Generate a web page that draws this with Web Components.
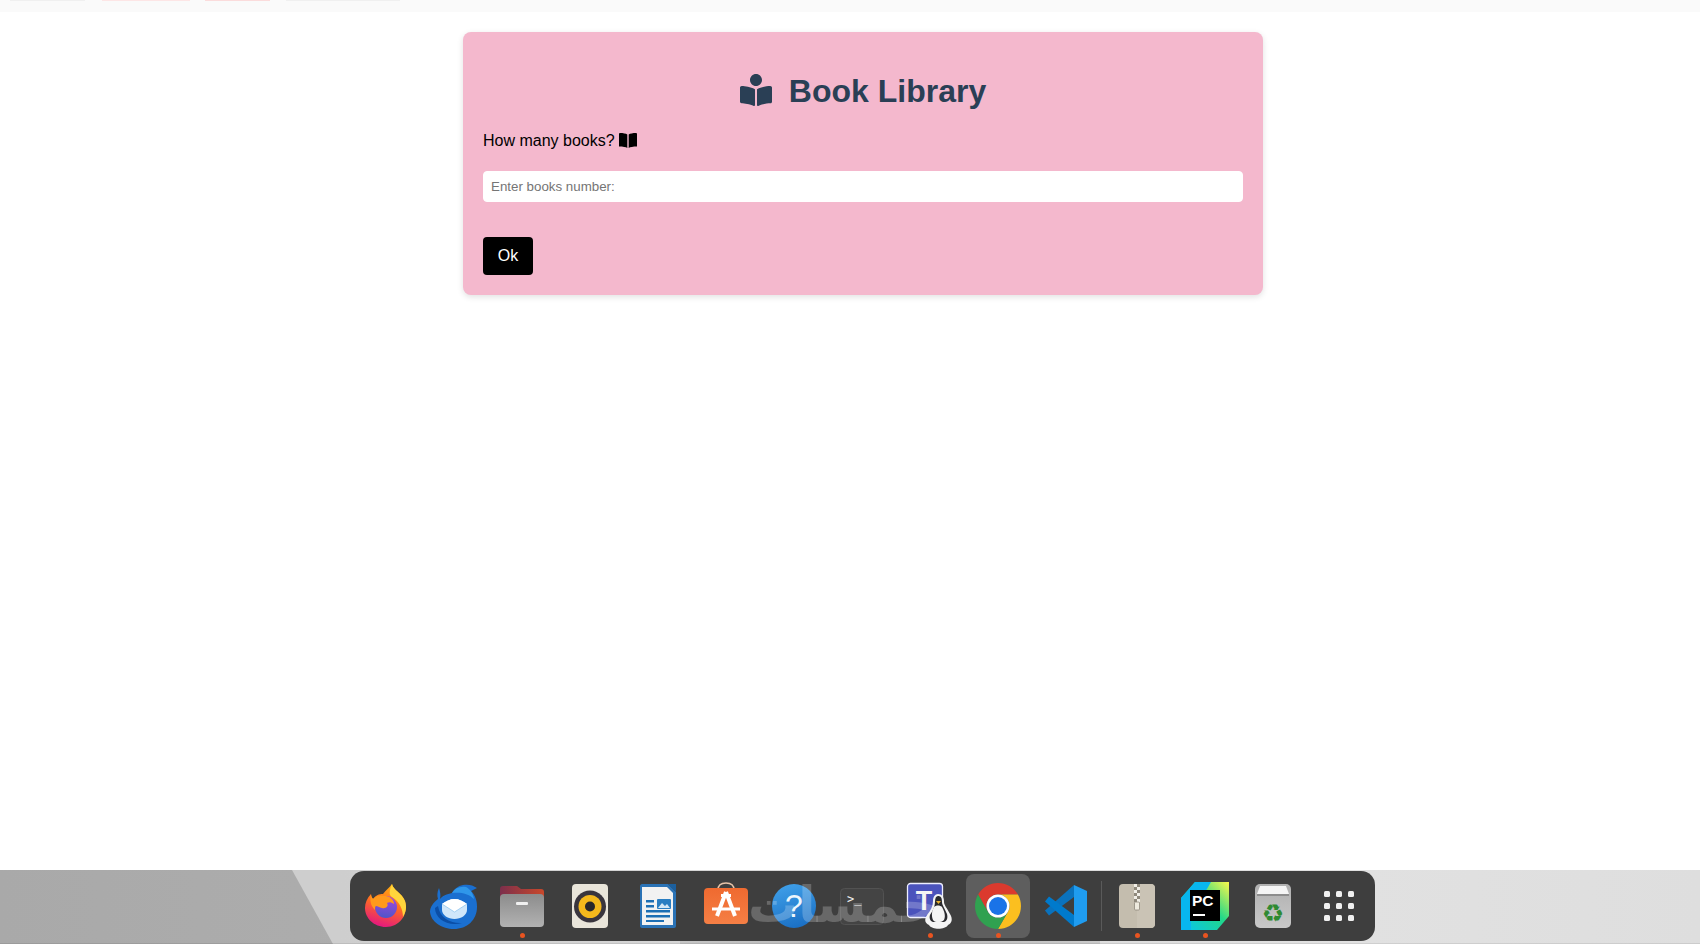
<!DOCTYPE html>
<html>
<head>
<meta charset="utf-8">
<title>Book Library</title>
<style>
  html, body { margin: 0; height: 100%; background: #fff; font-family: "Liberation Sans", Arial, sans-serif; overflow: hidden; }
  body { display: flex; flex-direction: column; }
</style>
</head>
<body>
<top-strip></top-strip>
<library-page>
  <library-card>
    <span slot="title">Book Library</span>
    <span slot="label">How many books?</span>
  </library-card>
</library-page>
<desk-strip>
  <dock-bar>
    <dock-item>
      <svg viewBox="0 0 48 48" width="48" height="48">
        <defs>
          <linearGradient id="ffBody" x1="0.7" y1="0" x2="0.4" y2="1"><stop offset="0" stop-color="#ffb20e"/><stop offset=".5" stop-color="#ff6a24"/><stop offset="1" stop-color="#e3177f"/></linearGradient>
          <linearGradient id="ffGlobe" x1="0.5" y1="0" x2="0.4" y2="1"><stop offset="0" stop-color="#a447e0"/><stop offset="1" stop-color="#4f55c8"/></linearGradient>
        </defs>
        <path d="M30 2C31 8 40 11 43 19C47 33 37 45 24 45C12 45 3 36 3 26C3 21 5 16 9 12C9 14 10 16 11 17C14 13 17 12 21 12C24 8 27 6 30 2Z" fill="url(#ffBody)"/>
        <path d="M30 2C31 8 40 11 43 19C45 25 44 30 41 35C41 27 37 19 30 15C26 13 28 7 30 2Z" fill="#ffd53c"/>
        <circle cx="24" cy="25" r="11" fill="url(#ffGlobe)"/>
        <path d="M9 12C9 14 10 16 11 17C14 13 19 13 24 14C29 15 32 18 32 22C29 20 27 20 25 21C27 24 24 27 20 26C15 25 13 21 13 28C10 25 7 20 9 12Z" fill="#ff9a1c"/>
      </svg>
    </dock-item>
    <dock-item>
      <svg viewBox="0 0 48 48" width="48" height="48">
        <path d="M9 6C7 10 7 14 8 17C3 21 0 25 0 30C1 40 12 47 24 47C37 47 47 38 47 25C47 18 45 13 41 9L47 6C43 3 38 2 33 3C28 4 24 7 22 11C17 12 12 14 10 17C11 13 10 9 9 6Z" fill="#1a6fd0"/>
        <path d="M22 11C25 6 30 4 36 5C40 7 43 11 44 17C38 11 30 10 22 11Z" fill="#2f97ea"/>
        <path d="M5 26C5 37 18 45 32 41C22 42 10 37 8 24Z" fill="#0b4ea6"/>
        <path d="M12 22C16 19 20 17 24.500 17C29 17 33 19 37 22V28C37 33 31 37 24.500 37C18 37 12 33 12 28Z" fill="#cfe6fa"/>
        <path d="M12 22C16 19 20 17 24.500 17C29 17 33 19 37 22L24.500 30Z" fill="#fff"/>
        <path d="M12 22L24.500 30L37 22" fill="none" stroke="#93c6ef" stroke-width=".8"/>
      </svg>
    </dock-item>
    <dock-item running>
      <svg viewBox="0 0 48 48" width="48" height="48">
        <defs>
          <linearGradient id="fdBack" x1="0" y1="0" x2="1" y2="0"><stop offset="0" stop-color="#7c2f4c"/><stop offset="1" stop-color="#c9482b"/></linearGradient>
          <linearGradient id="fdFront" x1="0" y1="0" x2="0" y2="1"><stop offset="0" stop-color="#8c8c8c"/><stop offset="1" stop-color="#b2b2b2"/></linearGradient>
        </defs>
        <path d="M2 7C2 5 3 4 5 4H19L23 7H43C45 7 46 8 46 10V20H2Z" fill="url(#fdBack)"/>
        <rect x="2" y="12" width="44" height="33" rx="4" fill="url(#fdFront)"/>
        <rect x="18" y="20" width="12" height="3" rx="1" fill="#f0f0f0"/>
      </svg>
    </dock-item>
    <dock-item>
      <svg viewBox="0 0 48 48" width="48" height="48">
        <rect x="6" y="2" width="36" height="44" rx="4" fill="#e9e5da"/>
        <circle cx="24" cy="24.500" r="16" fill="#39353d"/>
        <circle cx="24" cy="24.500" r="11.500" fill="#f4b81c"/>
        <circle cx="24" cy="24.500" r="5" fill="#29272b"/>
      </svg>
    </dock-item>
    <dock-item>
      <svg viewBox="0 0 48 48" width="48" height="48">
        <path d="M6 4C6 3 7 2 8 2H34L42 10V44C42 45 41 46 40 46H8C7 46 6 45 6 44Z" fill="#2a72b5"/>
        <path d="M8 5H33L39 11V43H8Z" fill="#f2f2f2"/>
        <path d="M34 2H42V10Z" fill="#1b5f9e"/>
        <path d="M12 18H20V20.500H12ZM12 23H20V25.500H12ZM12 28H36V30.500H12ZM12 33H36V35.500H12ZM12 38H30V40H12Z" fill="#1d6fb4"/>
        <rect x="23" y="17" width="14" height="10" rx="1" fill="#2a7ec2"/>
        <path d="M24 26L28 21L31 24L33 22L36 26Z" fill="#d5e8f6"/>
      </svg>
    </dock-item>
    <dock-item>
      <svg viewBox="0 0 48 48" width="48" height="48">
        <defs><linearGradient id="acBag" x1="0" y1="0" x2="0" y2="1"><stop offset="0" stop-color="#ef6a30"/><stop offset="1" stop-color="#f57f45"/></linearGradient></defs>
        <path d="M16 8C16 3 19 1 24 1C29 1 32 3 32 8" fill="none" stroke="#e7c3a8" stroke-width="1.500"/>
        <rect x="2" y="6" width="44" height="36" rx="4" fill="url(#acBag)"/>
        <path d="M24 10L15 34M24 10L33 34" stroke="#fff" stroke-width="4" fill="none"/>
        <path d="M10 27H38" stroke="#fff" stroke-width="3"/>
        <path d="M19 12H29V15H19Z" fill="#fff"/>
      </svg>
    </dock-item>
    <dock-item>
      <svg viewBox="0 0 48 48" width="48" height="48">
        <defs><linearGradient id="hpBall" x1="0.3" y1="0" x2="0.6" y2="1"><stop offset="0" stop-color="#3f9fe8"/><stop offset="1" stop-color="#1a6fc4"/></linearGradient></defs>
        <circle cx="24" cy="24" r="22" fill="url(#hpBall)"/>
        <text x="24" y="35" text-anchor="middle" font-family="Liberation Sans, sans-serif" font-size="32" fill="#eef6fc">?</text>
      </svg>
    </dock-item>
    <dock-item>
      <svg viewBox="0 0 48 48" width="48" height="48">
        <rect x="2.500" y="6.500" width="43" height="36" rx="4" fill="#444" stroke="#525252"/>
        <text x="9" y="21" font-family="DejaVu Sans Mono, monospace" font-size="12" fill="#f2f2f2">&gt;_</text>
      </svg>
    </dock-item>
    <dock-item running>
      <svg viewBox="0 0 48 48" width="48" height="48">
        <rect x="1.500" y="1.500" width="35" height="34" rx="3" fill="#4b53bc" stroke="#eef" stroke-width="1.300"/>
        <text x="18" y="28" text-anchor="middle" font-family="Liberation Sans, sans-serif" font-weight="700" font-size="27" fill="#f4f4f4">T</text>
        <path d="M32 12C36 12 38 15 38 20C38 23 41 26 44 32C47 37 46 41 42 43C39 48 26 48 23 43C19 41 18 38 21 33C25 28 27 24 27 19C27 15 29 12 32 12Z" fill="#f4f4f4"/>
        <path d="M32 14C35 14 36 16 36 20C36 23 39 27 41 32C42 36 41 39 38 40L27 40C24 39 23 36 24 33C27 28 29 24 29 20C29 16 30 14 32 14Z" fill="#2a2a2e"/>
        <path d="M28 25C30 23 34 23 36 25C38 29 40 33 38 38C35 41 29 41 27 38C25 33 26 29 28 25Z" fill="#f4f4f4"/>
        <path d="M30 19L35 19L32.500 22Z" fill="#e8b030"/>
      </svg>
    </dock-item>
    <dock-item running active>
      <svg viewBox="0 0 48 48" width="48" height="48">
        <path d="M4.100 12.500A23 23 0 0 1 43.900 12.500L24 12.500A11.500 11.500 0 0 0 14 30Z" fill="#db3a2e"/>
        <path d="M43.900 12.500A23 23 0 0 1 24 47L34 29.800A11.500 11.500 0 0 0 24 12.500Z" fill="#fbbf1f"/>
        <path d="M24 47A23 23 0 0 1 4.100 12.500L14 30A11.500 11.500 0 0 0 34 29.800Z" fill="#30a150"/>
        <circle cx="24" cy="24" r="11.500" fill="#fff"/>
        <circle cx="24" cy="24" r="9" fill="#1a73e8"/>
      </svg>
    </dock-item>
    <dock-item>
      <svg viewBox="0 0 48 48" width="48" height="48">
        <polygon points="3,28.500 32,3 32,15 7,33.500" fill="#0a72bd"/>
        <polygon points="3,19.500 7,14.500 32,33 32,45" fill="#007acc"/>
        <polygon points="32,3 45,9 45,39 32,45" fill="#1f9cf0"/>
      </svg>
    </dock-item>
    <dock-sep></dock-sep>
    <dock-item running>
      <svg viewBox="0 0 48 48" width="48" height="48">
        <rect x="6" y="2" width="36" height="44" rx="4" fill="#c4bdae"/>
        <path d="M24 2H38C40 2 42 4 42 6V42C42 44 40 46 38 46H24Z" fill="#cac3b5"/>
        <path d="M21 2H24V5H21ZM24 5H27V8H24ZM21 8H24V11H21ZM24 11H27V14H24ZM21 14H24V17H21ZM24 17H27V20H24Z" fill="#f1eee6"/>
        <path d="M24 2H27V5H24ZM21 5H24V8H21ZM24 8H27V11H24ZM21 11H24V14H21ZM24 14H27V17H24ZM21 17H24V20H21Z" fill="#8f897c"/>
        <rect x="21.500" y="20" width="5" height="8" rx="1" fill="#eeeade" stroke="#8f897c" stroke-width=".8"/>
      </svg>
    </dock-item>
    <dock-item running>
      <svg viewBox="0 0 48 48" width="48" height="48">
        <defs><linearGradient id="pcBg" x1="0" y1="1" x2="1" y2="0"><stop offset="0" stop-color="#07c3f2"/><stop offset=".55" stop-color="#21d789"/><stop offset="1" stop-color="#fcf84a"/></linearGradient></defs>
        <path d="M14 0H48V34L36 48H0V16Z" fill="url(#pcBg)"/>
        <path d="M0 16L14 0H30L10 34V48H0Z" fill="#08b6ee"/>
        <rect x="9" y="8" width="30" height="31" fill="#000"/>
        <text x="11" y="24" font-family="Liberation Sans, sans-serif" font-weight="700" font-size="15.500" fill="#fff">PC</text>
        <rect x="12" y="32" width="12" height="2" fill="#fff"/>
      </svg>
    </dock-item>
    <dock-item>
      <svg viewBox="0 0 48 48" width="48" height="48">
        <defs><linearGradient id="trBody" x1="0" y1="0" x2="0" y2="1"><stop offset="0" stop-color="#b0b0b0"/><stop offset="1" stop-color="#c8c8c8"/></linearGradient></defs>
        <rect x="6" y="2" width="36" height="44" rx="5" fill="url(#trBody)"/>
        <path d="M11 4H37L40 12H8Z" fill="#f5f5f5"/>
        <path d="M8 12H40V14H8Z" fill="#8d8d8d"/>
        <text x="24" y="40" text-anchor="middle" font-family="DejaVu Sans, sans-serif" font-size="25" fill="#2f8a32">&#9851;</text>
      </svg>
    </dock-item>
    <dock-item>
      <svg viewBox="0 0 48 48" width="48" height="48" fill="#f0f0f0">
        <rect x="7" y="9" width="6" height="6" rx="1.500"/><rect x="19" y="9" width="6" height="6" rx="1.500"/><rect x="31" y="9" width="6" height="6" rx="1.500"/>
        <rect x="7" y="21" width="6" height="6" rx="1.500"/><rect x="19" y="21" width="6" height="6" rx="1.500"/><rect x="31" y="21" width="6" height="6" rx="1.500"/>
        <rect x="7" y="33" width="6" height="6" rx="1.500"/><rect x="19" y="33" width="6" height="6" rx="1.500"/><rect x="31" y="33" width="6" height="6" rx="1.500"/>
      </svg>
    </dock-item>
  </dock-bar>
</desk-strip>

<script>
// tiny helper, every element below clones its own template
function makeTemplate(html) {
  const template = document.createElement('template')
  template.innerHTML = html
  return template
}

class BaseEl extends HTMLElement {
  constructor() {
    super()
    this._shadowRoot = this.attachShadow({ mode: 'open' })
    this._shadowRoot.appendChild(this.constructor.template.content.cloneNode(true))
  }
}

class TopStrip extends BaseEl {}
TopStrip.template = makeTemplate(`
  <style>
    :host { display: flex; height: 12px; background: #fafafa; flex: none; align-items: flex-start; }
    i { display: block; height: 1px; }
    .a { width: 75px; margin-left: 10px; background: #f0f0f0; }
    .b { width: 88px; margin-left: 17px; background: #fde6e6; }
    .c { width: 65px; margin-left: 15px; background: #fbdcdc; }
    .d { width: 114px; margin-left: 16px; background: #f0f0f0; }
  </style>
  <i class="a"></i><i class="b"></i><i class="c"></i><i class="d"></i>
`)
customElements.define('top-strip', TopStrip)

class LibraryPage extends BaseEl {}
LibraryPage.template = makeTemplate(`
  <style>
    :host { display: flex; flex: 1; justify-content: center; align-items: flex-start; padding: 20px 0 0 26px; }
  </style>
  <slot></slot>
`)
customElements.define('library-page', LibraryPage)

class LibraryCard extends BaseEl {}
LibraryCard.template = makeTemplate(`
  <style>
    :host {
      display: block; box-sizing: border-box; width: 800px; padding: 20px;
      background: #f4b8cd; border-radius: 8px; box-shadow: 0 2px 6px rgba(0,0,0,.12);
      font: 16px "Liberation Sans", Arial, sans-serif; color: #000;
    }
    h1 { display: flex; justify-content: center; align-items: center; gap: 17px; margin: 21px 0 22px; font-size: 32px; line-height: 37px; color: #2a3f55; }
    h1 svg { width: 32px; height: 32px; fill: currentColor; margin-bottom: 3px; }
    .label { display: flex; align-items: center; gap: 4px; height: 18px; margin-bottom: 21px; }
    .label svg { width: 18px; height: 15px; margin-bottom: 1px; }
    input {
      display: block; box-sizing: border-box; width: 100%; height: 31px; padding: 0 7px; margin-bottom: 35px;
      border: 1px solid #fff; border-radius: 4px; background: #fff; font: 13.333px "Liberation Sans", Arial, sans-serif;
    }
    button {
      display: block; width: 50px; height: 38px; padding: 0; border: 0; border-radius: 4px;
      background: #000; color: #fff; font: 16px "Liberation Sans", Arial, sans-serif;
    }
  </style>
  <h1>
    <svg viewBox="0 0 512 512"><path d="M352 96c0-53.020-42.980-96-96-96s-96 42.980-96 96 42.980 96 96 96 96-42.980 96-96zM233.590 241.100c-59.330-36.320-155.430-46.300-203.790-49.050C13.550 191.130 0 203.510 0 219.140v222.800c0 14.330 11.590 26.280 26.490 27.050 43.660 2.290 131.990 10.680 193.040 41.430 9.370 4.720 20.480-1.710 20.480-11.870V252.560c-.01-4.670-2.320-8.950-6.420-11.460zm248.610-49.050c-48.350 2.740-144.460 12.730-203.780 49.050-4.100 2.510-6.410 6.960-6.410 11.630v245.790c0 10.190 11.140 16.630 20.540 11.900 61.040-30.720 149.320-39.110 192.970-41.400 14.900-.78 26.490-12.730 26.490-27.060V219.140c-.01-15.630-13.560-28.010-29.810-27.090z"/></svg>
    <slot name="title"></slot>
  </h1>
  <div class="label">
    <slot name="label"></slot>
    <svg viewBox="0 0 18 15"><path d="M1 0C4 0 7 .5 8.300 1.500V15C7 14 4 13.500 0 13.500V1C0 .5 .5 0 1 0ZM17 0C14 0 11 .5 9.700 1.500V15C11 14 14 13.500 18 13.500V1C18 .5 17.500 0 17 0Z"/></svg>
  </div>
  <input type="number" placeholder="Enter books number:">
  <button>Ok</button>
`)
customElements.define('library-card', LibraryCard)

class DeskStrip extends BaseEl {}
DeskStrip.template = makeTemplate(`
  <style>
    :host {
      display: flex; flex: none; height: 74px; box-sizing: border-box; padding-top: 1px; justify-content: center;
      position: relative; overflow: hidden;
    }
    .wall { position: absolute; inset: 0; background: linear-gradient(90deg, #cecece 0, #cecece 20%, #d8d8d8 50%, #e1e1e1 80%, #dedede 100%); }
    .shade { position: absolute; inset: 0; background: linear-gradient(90deg, #a9a9a9, #bababa); clip-path: polygon(0 0, 292px 0, 333px 100%, 0 100%); }
    .low { position: absolute; left: 680px; width: 420px; bottom: 0; height: 8px; background: linear-gradient(90deg, #c4c4c4, #b8b8b8 40%, #c8c8c8); }
    .edge { position: absolute; left: 0; right: 0; bottom: 0; height: 1px; background: rgba(0,0,0,.08); }
    slot { display: block; position: relative; }
  </style>
  <div class="wall"></div><div class="shade"></div><div class="low"></div><div class="edge"></div>
  <slot></slot>
`)
customElements.define('desk-strip', DeskStrip)

class DockBar extends BaseEl {}
DockBar.template = makeTemplate(`
  <style>
    :host { display: flex; position: relative; box-sizing: border-box; width: 1025px; height: 70px; padding: 0 0 0 2px; margin-left: 25px; background: #3e3e3e; border-radius: 14px; align-items: center; }
    .mark {
      position: absolute; left: 398px; top: 2px; direction: rtl; white-space: nowrap;
      font: 700 50px/64px "DejaVu Sans", sans-serif; color: rgba(255,255,255,.22);
    }
  </style>
  <slot></slot>
  <span class="mark">خمسات</span>
`)
customElements.define('dock-bar', DockBar)

class DockItem extends BaseEl {}
DockItem.template = makeTemplate(`
  <style>
    :host { display: block; position: relative; flex: none; width: 68px; height: 64px; }
    .tile { position: absolute; inset: 0 2px; border-radius: 8px; }
    :host([active]) .tile { background: #5e5e5e; }
    .icon { position: absolute; left: 10px; top: 8px; width: 48px; height: 48px; }
    .dot { display: none; position: absolute; left: 31.500px; bottom: 0; width: 5px; height: 5px; border-radius: 50%; background: #e95420; }
    :host([running]) .dot { display: block; }
  </style>
  <div class="tile"></div>
  <div class="icon"><slot></slot></div>
  <div class="dot"></div>
`)
customElements.define('dock-item', DockItem)

class DockSep extends BaseEl {}
DockSep.template = makeTemplate(`
  <style>
    :host { display: block; flex: none; width: 3px; height: 50px; }
    i { display: block; width: 1px; height: 100%; margin-left: 1px; background: #5a5a5a; }
  </style>
  <i></i>
`)
customElements.define('dock-sep', DockSep)
</script>
</body>
</html>
